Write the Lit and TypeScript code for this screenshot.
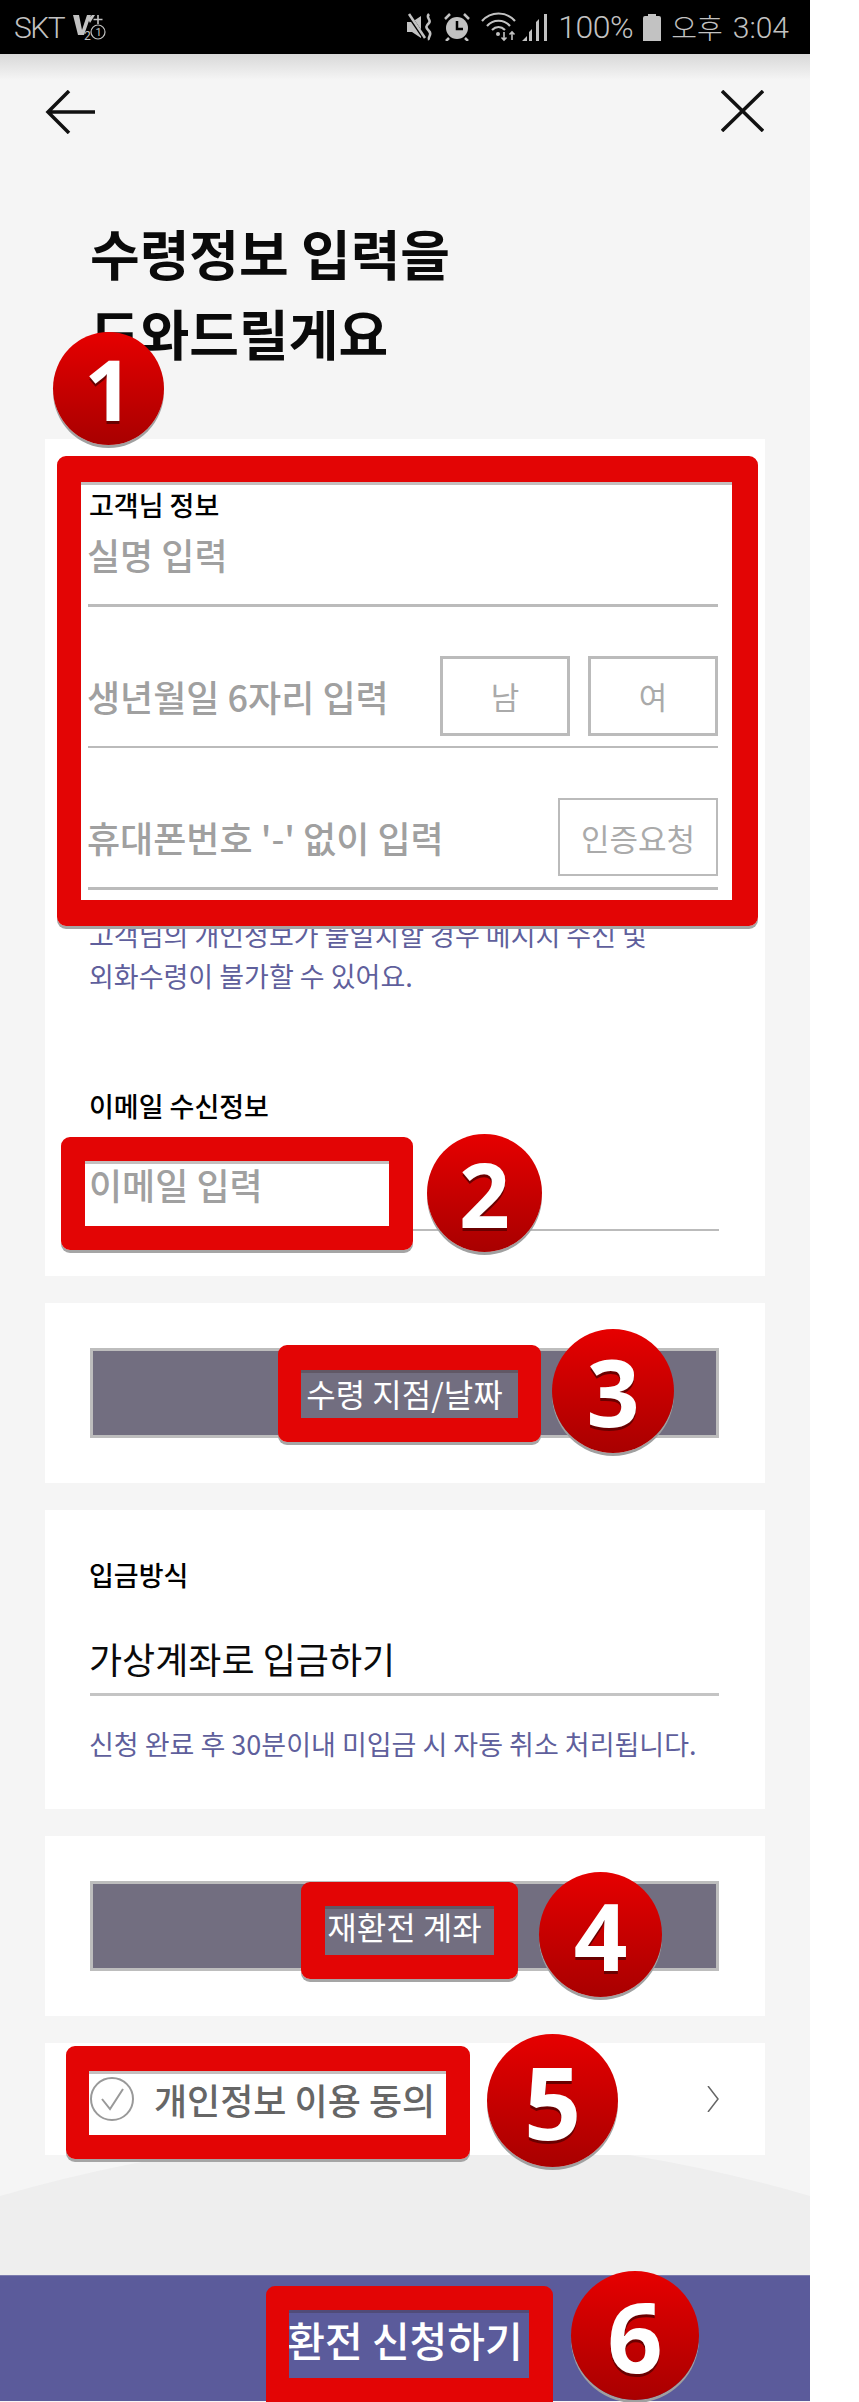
import { LitElement, html, css } from "lit";
import { customElement } from "lit/decorators.js";

const boxes = [
  { x: 57, y: 456, w: 701, h: 470, bl: 24, br: 26, bt: 26, bb: 26 },
  { x: 61, y: 1137, w: 352, h: 113, bl: 24, br: 24, bt: 24, bb: 24 },
  { x: 278, y: 1345, w: 263, h: 97, bl: 23, br: 23, bt: 25, bb: 24 },
  { x: 301, y: 1882, w: 217, h: 97, bl: 24, br: 24, bt: 24, bb: 24 },
  { x: 66, y: 2046, w: 404, h: 113, bl: 23, br: 24, bt: 25, bb: 24 },
  { x: 266, y: 2286, w: 287, h: 128, bl: 23, br: 24, bt: 24, bb: 36 },
];

const badges = [
  { n: "1", x: 53, y: 332, w: 111, h: 113 },
  { n: "2", x: 427, y: 1134, w: 115, h: 118 },
  { n: "3", x: 552, y: 1329, w: 122, h: 124 },
  { n: "4", x: 539, y: 1872, w: 123, h: 125 },
  { n: "5", x: 487, y: 2034, w: 131, h: 133 },
  { n: "6", x: 571, y: 2271, w: 128, h: 129 },
];

@customElement("app-root")
export class AppRoot extends LitElement {
  static styles = css`
    :host {
      display: block;
      width: 859px;
      height: 2402px;
      background: #fff;
      font-family: "Noto Sans CJK KR", "Noto Sans", sans-serif;
    }
    * { box-sizing: border-box; }
    .screen {
      position: relative;
      width: 810px;
      height: 2402px;
      overflow: hidden;
      background: #f5f5f5;
      display: flex;
      flex-direction: column;
    }
    .status {
      height: 54px;
      flex: none;
      background: #000;
      color: #c2c2c2;
      display: flex;
      align-items: center;
      justify-content: space-between;
      padding: 0 21px 0 14px;
      font-family: Roboto, "Noto Sans CJK KR", sans-serif;
    }
    .status-group { display: flex; align-items: center; }
    .carrier { font-size: 30px; letter-spacing: -1.5px; margin-right: 9px; font-weight: 300; }
    .pct { font-size: 32px; margin-left: 9px; margin-right: 10px; font-weight: 300; letter-spacing: -0.5px; }
    .ampm { font-size: 28px; font-family: "Noto Sans CJK KR", sans-serif; font-weight: 300; margin-left: 10px; margin-right: 10px; letter-spacing: 0; }
    .time { font-size: 30px; font-weight: 300; }
    .nav {
      flex: none;
      height: 159px;
      padding: 36px 46px 0 45px;
      display: flex;
      justify-content: space-between;
      align-items: flex-start;
      background: linear-gradient(#d8d8d8, #f5f5f5 26px);
    }
    .title {
      margin: 0 0 66px 90px;
      font-size: 54px;
      line-height: 80px;
      font-weight: 700;
      color: #0a0a0a;
    }
    .stack { display: flex; flex-direction: column; gap: 27px; padding: 0 45px; position: relative; z-index: 1; }
    .card { background: #fff; padding: 0 46px 0 45px; }
    .card.pad-b { padding-bottom: 45px; }
    .label {
      font-size: 27px;
      line-height: 34px;
      font-weight: 500;
      color: #000;
      padding-top: 49px;
      margin-left: -1px;
    }
    .field {
      display: flex;
      align-items: center;
      justify-content: space-between;
      border-bottom: 2px solid #bbb;
      color: #a0a0a0;
      font-size: 36px;
      font-weight: 500;
    }
    .f-name { height: 85px; padding-bottom: 18px; border-bottom-width: 3px; margin: 0 1px 0 -2px; text-indent: -1px; }
    .f-row { height: 141px; padding-top: 49px; padding-bottom: 11px; margin: 0 1px 0 -2px; text-indent: -1px; }
    .f-row.thick { height: 142px; padding-top: 50px; border-bottom-width: 3px; }
    .choices { display: flex; gap: 18px; text-indent: 0; }
    .choice {
      display: flex; align-items: center; justify-content: center;
      border: 3px solid #bbb;
      width: 130px; height: 80px;
      font-size: 31px; font-weight: 400; color: #aaa;
    }
    .request {
      display: flex; align-items: center; justify-content: center;
      border: 2px solid #bbb;
      width: 160px; height: 78px;
      font-size: 31px; font-weight: 400; color: #aaa;
      text-indent: 0;
    }
    .note { font-size: 27px; line-height: 41px; color: #5f5f9c; margin-left: -1px; }
    .note.top { margin-top: 24px; }
    .note.method { margin-top: 27px; }
    .mail-label { padding-top: 93px; }
    .f-mail { height: 108px; padding-bottom: 20px; padding-top: 36px; text-indent: -1px; }
    .method-label { padding-top: 48px; }
    .f-method { height: 104px; padding-top: 42px; padding-bottom: 11px; color: #0a0a0a; font-weight: 400; border-bottom-width: 3px; border-color: #c4c4c4; text-indent: -1px; }
    .action { padding: 45px 46px 45px 45px; }
    .action-btn {
      height: 90px;
      background: #726e80;
      border: 3px solid #bdbdbd;
      display: flex; align-items: center; justify-content: center;
      color: #fff;
      font-size: 32px;
    }
    .agree {
      height: 112px;
      display: flex;
      align-items: center;
      color: #666;
      font-size: 36px;
      padding: 0 46px 0 45px;
      background: #fff;
    }
    .agree .txt { margin-left: 20px; flex: 1; font-weight: 500; }
    .hump { flex: none; height: 120px; position: relative; }
    .hump svg { position: absolute; left: 0; top: -18px; display: block; }
    .submit {
      flex: none;
      height: 126px;
      background: #5b5b9b;
      border-top: 1px solid #7c7cae;
      display: flex; align-items: center; justify-content: center;
      color: #fff;
      font-size: 41px;
      font-weight: 500;
    }
    .box {
      position: absolute;
      z-index: 2;
      border-style: solid;
      border-color: #e30505;
      border-radius: 9px;
      box-shadow: 0 3px 0 #a5a5a5, inset 0 3px 0 rgba(60, 40, 40, 0.3);
    }
    .badge {
      position: absolute;
      z-index: 3;
      border-radius: 50%;
      background: linear-gradient(#e60000, #d00000 35%, #a80000);
      box-shadow: 0 3px 0 #a0a0a0;
      display: flex; align-items: center; justify-content: center;
      color: #fff;
      font-family: "Open Sans", "Noto Sans", sans-serif;
      font-weight: 700;
      line-height: 1;
      text-shadow: 0 3px 0 #6a0000;
    }
    svg { display: block; flex: none; }
    .gap-10 { margin-right: 10px; }
    .gap-11 { margin-right: 11px; }
    .gap-5 { margin-right: 5px; }
  `;

  render() {
    return html`
      <div class="screen">
        <div class="status">
          <div class="status-group">
            <span class="carrier">SKT</span>
            <svg width="33" height="28" viewBox="0 0 33 28" fill="#c2c2c2">
              <path d="M0 2h6l3 15L14 2h4l-7 20H5z" />
              <path d="M15 6 19 2h3l-5 8z" />
              <path d="M25 2v9M20.500 6.500h9" stroke="#c2c2c2" stroke-width="1.600" fill="none" />
              <text x="11" y="27" font-size="12" font-family="Roboto">2</text>
              <circle cx="25" cy="19" r="7" fill="none" stroke="#c2c2c2" stroke-width="1.200" />
              <text x="22.500" y="23" font-size="11" font-family="Roboto">1</text>
            </svg>
          </div>
          <div class="status-group">
            <svg class="gap-10" width="27" height="28" viewBox="0 0 27 28" fill="#c2c2c2">
              <path d="M0 9h5l9-6v22l-9-6H0z" />
              <path d="M1 1l17 25" stroke="#000" stroke-width="4" />
              <path d="M2 1l16 24" stroke="#c2c2c2" stroke-width="2.500" />
              <path d="M22 1c-4 4 3 6 0 9s-4 4 0 8-2 6 0 9" stroke="#c2c2c2" stroke-width="2.500" fill="none" />
            </svg>
            <svg class="gap-11" width="26" height="28" viewBox="0 0 26 28">
              <circle cx="13" cy="15" r="11" fill="#c2c2c2" />
              <path d="M13 8v8h6" stroke="#000" stroke-width="2.500" fill="none" />
              <path d="M1 6l5-5M25 6l-5-5M5 25l-3 3M21 25l3 3" stroke="#c2c2c2" stroke-width="2.500" />
            </svg>
            <svg class="gap-5" width="36" height="30" viewBox="0 0 36 30" fill="none" stroke="#c2c2c2" stroke-width="2.200">
              <path d="M1 9c9-10 24-10 33 0M6 14c6-7 17-7 23 0M11 18c4-4 9-4 13 0" />
              <circle cx="17" cy="22" r="2" fill="#c2c2c2" stroke="none" />
              <path d="M23 20v8M20.500 25.500l2.500 2.500 2.500-2.500M31 28v-8M28.500 22.500l2.500-2.500 2.500 2.500" stroke-width="1.600" />
            </svg>
            <svg width="27" height="27" viewBox="0 0 27 27" fill="#c2c2c2">
              <path d="M0 27l5-5v5zM7 27V18l3-3v12zM14 27V8l3-3v22zM22 27V0h3v27z" />
            </svg>
            <span class="pct">100%</span>
            <svg width="18" height="27" viewBox="0 0 18 27" fill="#c2c2c2">
              <path d="M5 0h8v2h3a2 2 0 0 1 2 2v23H0V4a2 2 0 0 1 2-2h3z" />
            </svg>
            <span class="ampm">오후</span>
            <span class="time">3:04</span>
          </div>
        </div>

        <div class="nav">
          <svg width="50" height="44" viewBox="0 0 50 44" fill="none" stroke="#111" stroke-width="3.500">
            <path d="M50 22H3M24 1 3 22l21 21" />
          </svg>
          <svg width="43" height="42" viewBox="0 0 43 42" fill="none" stroke="#111" stroke-width="3.500">
            <path d="M1 1l41 40M42 1 1 41" />
          </svg>
        </div>

        <h1 class="title">수령정보 입력을<br />도와드릴게요</h1>

        <div class="stack">
          <section class="card pad-b">
            <div class="label">고객님 정보</div>
            <div class="field f-name">실명 입력</div>
            <div class="field f-row">
              <span>생년월일 6자리 입력</span>
              <div class="choices">
                <div class="choice">남</div>
                <div class="choice">여</div>
              </div>
            </div>
            <div class="field f-row thick">
              <span>휴대폰번호 '-' 없이 입력</span>
              <div class="request">인증요청</div>
            </div>
            <div class="note top">고객님의 개인정보가 불일치할 경우 메시지 수신 및<br />외화수령이 불가할 수 있어요.</div>
            <div class="label mail-label">이메일 수신정보</div>
            <div class="field f-mail">이메일 입력</div>
          </section>

          <section class="card action"><div class="action-btn">수령 지점/날짜</div></section>

          <section class="card pad-b">
            <div class="label method-label">입금방식</div>
            <div class="field f-method">가상계좌로 입금하기</div>
            <div class="note method">신청 완료 후 30분이내 미입금 시 자동 취소 처리됩니다.</div>
          </section>

          <section class="card action"><div class="action-btn">재환전 계좌</div></section>

          <section class="agree">
            <svg width="44" height="44" viewBox="0 0 44 44" fill="none" stroke="#999" stroke-width="2">
              <circle cx="22" cy="22" r="21" />
              <path d="M12 22l8 10 13-20" />
            </svg>
            <span class="txt">개인정보 이용 동의</span>
            <svg width="12" height="26" viewBox="0 0 12 26" fill="none" stroke="#666" stroke-width="1.500">
              <path d="M1 0l10 13L1 26" />
            </svg>
          </section>
        </div>

        <div class="hump">
          <svg width="810" height="138" viewBox="0 0 810 138">
            <path d="M0 59Q405-59 810 59V138H0Z" fill="#eee" />
          </svg>
        </div>

        <div class="submit">환전 신청하기</div>

        ${boxes.map(
          (b) => html`<div
            class="box"
            style="left:${b.x}px;top:${b.y}px;width:${b.w}px;height:${b.h}px;border-width:${b.bt}px ${b.br}px ${b.bb}px ${b.bl}px"
          ></div>`
        )}
        ${badges.map(
          (b) => html`<div
            class="badge"
            style="left:${b.x}px;top:${b.y}px;width:${b.w}px;height:${b.h}px;font-size:${Math.round(b.h * 0.75)}px"
          >
            ${b.n}
          </div>`
        )}
      </div>
    `;
  }
}
